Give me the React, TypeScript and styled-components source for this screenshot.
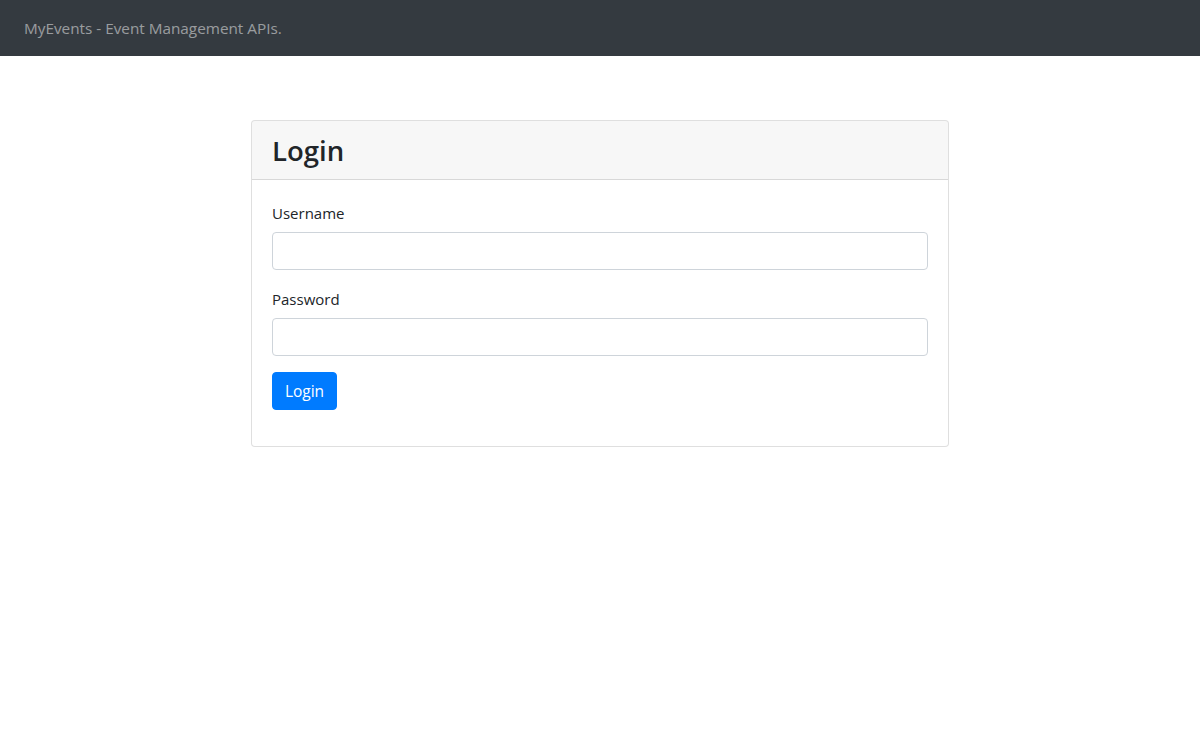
import React from 'react';
import styled, { createGlobalStyle } from 'styled-components';

const GlobalStyle = createGlobalStyle`
  * {
    box-sizing: border-box;
  }
  body {
    margin: 0;
    font-family: "Segoe UI", "Open Sans", "Liberation Sans", sans-serif;
    font-size: 16px;
    line-height: 1.5;
    color: #212529;
    background: #fff;
  }
`;

const Navbar = styled.nav`
  display: flex;
  align-items: center;
  height: 56px;
  padding: 0 24px;
  background: #343a40;
`;

const NavText = styled.span`
  color: rgba(255, 255, 255, 0.5);
  font-size: 15.3px;
`;

const Main = styled.main`
  display: flex;
  justify-content: center;
  padding-top: 64px;
`;

const Card = styled.div`
  width: 698px;
  border: 1px solid rgba(0, 0, 0, 0.125);
  border-radius: 4px;
  background: #fff;
`;

const CardHeader = styled.div`
  padding: 12px 20px;
  background: rgba(0, 0, 0, 0.03);
  border-bottom: 1px solid rgba(0, 0, 0, 0.125);
  border-radius: 3px 3px 0 0;
`;

const Title = styled.h3`
  margin: 0;
  font-size: 27.5px;
  font-weight: 600;
  line-height: 34px;
  padding-top: 1px;
  height: 34px;
`;

const CardBody = styled.form`
  padding: 20px;
`;

const FormGroup = styled.div`
  margin-bottom: 16px;
`;

const Label = styled.label`
  display: block;
  margin-bottom: 8px;
  font-size: 15px;
  line-height: 24px;
  padding-top: 1px;
  height: 24px;
`;

const Input = styled.input`
  display: block;
  width: 100%;
  height: 38px;
  padding: 6px 12px;
  font: inherit;
  color: #495057;
  border: 1px solid #ced4da;
  border-radius: 4px;
  background: #fff;
  outline: none;
`;

const Button = styled.button`
  display: inline-block;
  width: 65px;
  height: 38px;
  padding: 6px 0 5px;
  font: inherit;
  font-size: 15.5px;
  color: #fff;
  background: #007bff;
  border: 1px solid #007bff;
  border-radius: 4px;
  cursor: pointer;
`;

export default function App() {
  return (
    <>
      <GlobalStyle />
      <Navbar>
        <NavText>MyEvents - Event Management APIs.</NavText>
      </Navbar>
      <Main>
        <Card>
          <CardHeader>
            <Title>Login</Title>
          </CardHeader>
          <CardBody onSubmit={(e) => e.preventDefault()}>
            <FormGroup>
              <Label htmlFor='username'>Username</Label>
              <Input id='username' type='text' />
            </FormGroup>
            <FormGroup>
              <Label htmlFor='password'>Password</Label>
              <Input id='password' type='password' />
            </FormGroup>
            <FormGroup>
              <Button type='submit'>Login</Button>
            </FormGroup>
          </CardBody>
        </Card>
      </Main>
    </>
  );
}
